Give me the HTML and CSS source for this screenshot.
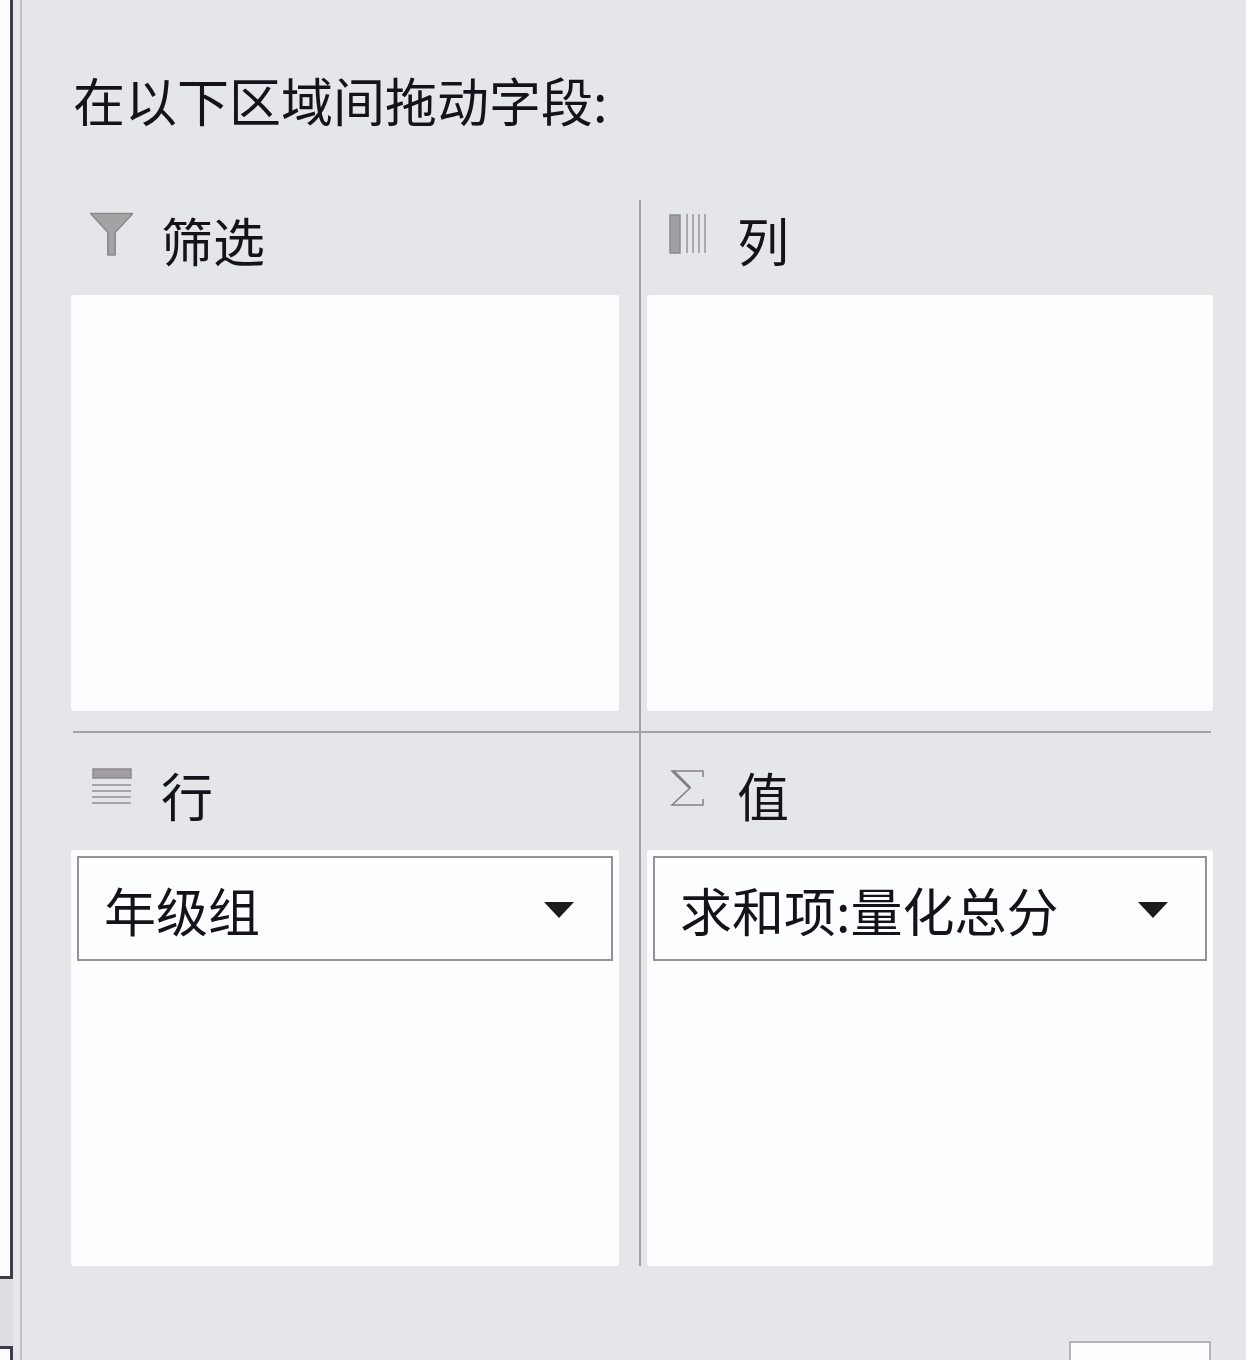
FILE: index.html
```
<!DOCTYPE html>
<html lang="zh-CN">
<head>
  <meta charset="UTF-8">
  <meta name="viewport" content="width=device-width, initial-scale=1.0">
  <title>数据透视表字段</title>
  <link rel="stylesheet" href="styles.css">
</head>
<body>
  <!-- Edge of the worksheet -->
  <div class="sheet-edge">
    <div class="sheet"></div>
    <div class="sheet-tabs"></div>
  </div>

  <main class="pane">
    <h1 class="title">在以下区域间拖动字段:</h1>

    <div class="areas">
      <section class="area">
        <h2 class="area-header">
          <svg class="icon" viewBox="0 0 44 44" aria-hidden="true">
            <path d="M1 1H43L26 20V43H17V20Z" fill="#a3a3a5"/>
            <path d="M0 1.500H43M1 2L18 20.500V43H25V20.500L42.500 2" fill="none" stroke="#8b8990" stroke-width="1.500"/>
          </svg>
          筛选
        </h2>
        <div class="drop-box"></div>
      </section>

      <section class="area area-right">
        <h2 class="area-header">
          <svg class="icon" viewBox="0 0 44 44" aria-hidden="true">
            <path d="M4 3H14V41H4Z" fill="#a0a0a2" stroke="#8b8990" stroke-width="1.500"/>
            <path d="M21 2V41M27 2V41M33 2V41M39 2V41" stroke="#99929f" stroke-width="1.500"/>
          </svg>
          列
        </h2>
        <div class="drop-box"></div>
      </section>

      <div class="divider"></div>

      <section class="area area-bottom">
        <h2 class="area-header">
          <svg class="icon" viewBox="0 0 44 44" aria-hidden="true">
            <path d="M3 2H41V11H3Z" fill="#a09ea2" stroke="#8b8990" stroke-width="1.500"/>
            <path d="M2 18H41M2 24H41M2 30H41M2 36H41" stroke="#908f9a" stroke-width="1.500"/>
          </svg>
          行
        </h2>
        <div class="drop-box">
          <button type="button" class="field">
            年级组
            <svg class="arrow" viewBox="0 0 30 16" aria-hidden="true"><path d="M0 0H30L15 16Z" fill="#1d1b1e"/></svg>
          </button>
        </div>
      </section>

      <section class="area area-right area-bottom">
        <h2 class="area-header">
          <svg class="icon" viewBox="0 0 44 44" aria-hidden="true">
            <path d="M37 10V4H6L24 21L6 38H37V32" fill="none" stroke="#828086" stroke-width="1.500"/>
            <path d="M7 4L24 21" stroke="#828086" stroke-width="3"/>
          </svg>
          值
        </h2>
        <div class="drop-box">
          <button type="button" class="field">
            求和项:量化总分
            <svg class="arrow" viewBox="0 0 30 16" aria-hidden="true"><path d="M0 0H30L15 16Z" fill="#1d1b1e"/></svg>
          </button>
        </div>
      </section>
    </div>

    <button type="button" class="update" aria-label="更新"></button>
  </main>
</body>
</html>
```
FILE: styles.css
```
* {
  box-sizing: border-box;
}

body {
  margin: 0;
  height: 100vh;
  display: flex;
  overflow: hidden;
  background: #e5e6e9;
  color: #15121c;
  font-family: "Noto Sans CJK SC", sans-serif;
  font-size: 52px;
  font-weight: 400;
  line-height: 72px;
}

/* Worksheet edge on the left */
.sheet-edge {
  width: 13px;
  flex: none;
  display: flex;
  flex-direction: column;
  background: #dedee2;
}

.sheet {
  flex: 1;
  background: #fdfdff;
  border-right: 3px solid #403a49;
  border-bottom: 3px solid #403a49;
}

.sheet-tabs {
  height: 14px;
  margin-top: 67px;
  background: #fdfdff;
  border-top: 3px solid #403a49;
  border-right: 3px solid #403a49;
}

/* Field pane */
.pane {
  flex: 1;
  min-width: 0;
  margin-left: 7px;
  padding: 64px 33px 0 49px;
  border-left: 2px solid #bfc0c6;
}

.title,
.area-header {
  margin: 0;
  font-size: inherit;
  font-weight: inherit;
}

.title {
  padding-left: 2px;
}

.areas {
  display: grid;
  grid-template-columns: calc(50% - 3px) 1fr;
  margin-top: 64px;
}

.area {
  padding: 4px 20px 20px 0;
}

.area-right {
  padding: 4px 0 20px 6px;
  border-left: 2px solid #a2a3a8;
}

.area-bottom {
  padding-top: 26px;
  padding-bottom: 0;
}

.area-header {
  display: flex;
  align-items: flex-start;
  gap: 27px;
  padding-left: 19px;
  margin-bottom: 19px;
}

.icon {
  width: 44px;
  height: 44px;
  margin-top: 8px;
  flex: none;
}

.divider {
  grid-column: 1 / -1;
  height: 2px;
  margin: 0 2px;
  background: #a2a3a8;
}

.drop-box {
  min-height: 416px;
  padding: 6px;
  background: #fcfdff;
  border-radius: 3px;
}

.field {
  width: 100%;
  height: 105px;
  display: flex;
  align-items: center;
  justify-content: space-between;
  padding: 2px 37px 0 25px;
  background: #fcfdff;
  border: 2px solid #93919c;
  color: inherit;
  font: inherit;
  cursor: pointer;
}

.arrow {
  width: 30px;
  height: 16px;
  flex: none;
}

/* Update button, runs past the bottom of the window */
.update {
  display: block;
  width: 142px;
  height: 72px;
  margin: 75px 2px 0 auto;
  background: #fcfdff;
  border: 2px solid #b2b4ba;
}
```
